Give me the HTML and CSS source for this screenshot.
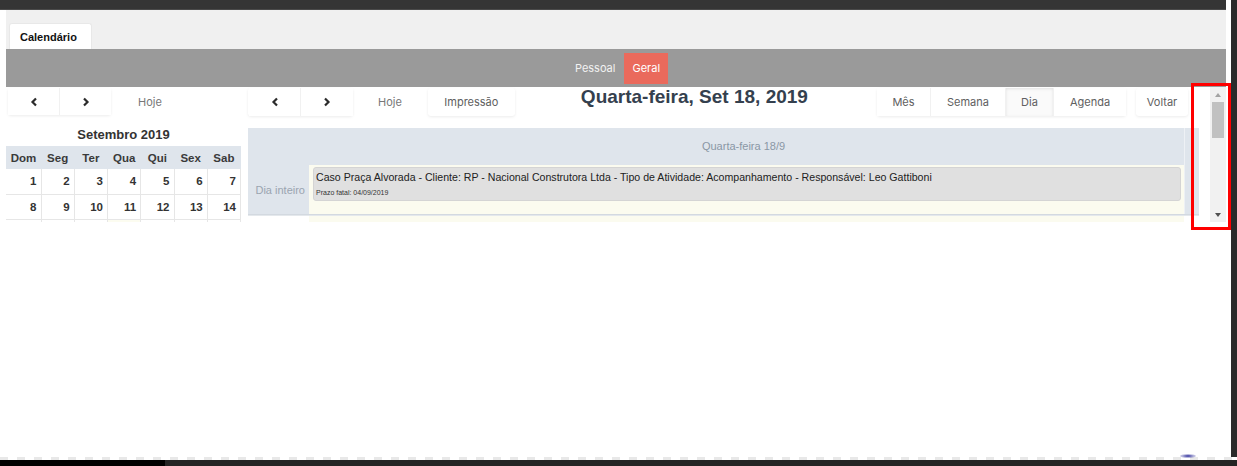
FILE: index.html
```html
<!DOCTYPE html>
<html lang="pt-BR">
<head>
<meta charset="utf-8">
<title>Calendário</title>
<link rel="stylesheet" href="styles.css">
</head>
<body>
<div class="screen">
  <div class="page">
    <div class="topbar"></div>
    <div class="app">
      <div class="tabs"><div class="tab">Calendário</div></div>
      <div class="band">
        <span class="band-item">Pessoal</span>
        <span class="band-item active">Geral</span>
      </div>
      <div class="viewport">
        <div class="content">
          <aside class="sidebar">
            <div class="toolbar">
              <div class="btn-group">
                <button class="btn nav nav-l"><svg width="8" height="10" viewBox="0 0 8 10"><path d="M6 1.5 2.5 5 6 8.5" fill="none" stroke="#2b2b2b" stroke-width="2.2"/></svg></button>
                <button class="btn nav nav-r"><svg width="8" height="10" viewBox="0 0 8 10"><path d="M2 1.5 5.5 5 2 8.5" fill="none" stroke="#2b2b2b" stroke-width="2.2"/></svg></button>
              </div>
              <button class="btn plain side-today">Hoje</button>
            </div>
            <div class="month-title">Setembro 2019</div>
            <table class="mini">
              <thead>
                <tr><th>Dom</th><th>Seg</th><th>Ter</th><th>Qua</th><th>Qui</th><th>Sex</th><th>Sab</th></tr>
              </thead>
              <tbody>
                <tr><td>1</td><td>2</td><td>3</td><td>4</td><td>5</td><td>6</td><td>7</td></tr>
                <tr><td>8</td><td>9</td><td>10</td><td>11</td><td>12</td><td>13</td><td>14</td></tr>
                <tr><td></td><td></td><td></td><td class="today"></td><td></td><td></td><td></td></tr>
              </tbody>
            </table>
          </aside>
          <main class="dayview">
            <div class="toolbar main-toolbar">
              <div class="btn-group">
                <button class="btn nav nav-l2"><svg width="8" height="10" viewBox="0 0 8 10"><path d="M6 1.5 2.5 5 6 8.5" fill="none" stroke="#2b2b2b" stroke-width="2.2"/></svg></button>
                <button class="btn nav nav-r2"><svg width="8" height="10" viewBox="0 0 8 10"><path d="M2 1.5 5.5 5 2 8.5" fill="none" stroke="#2b2b2b" stroke-width="2.2"/></svg></button>
              </div>
              <button class="btn plain main-today">Hoje</button>
              <button class="btn single print">Impressão</button>
              <h1 class="title">Quarta-feira, Set 18, 2019</h1>
              <div class="btn-group views">
                <button class="btn v-mes">Mês</button>
                <button class="btn v-sem">Semana</button>
                <button class="btn v-dia active">Dia</button>
                <button class="btn v-age">Agenda</button>
              </div>
              <button class="btn single back">Voltar</button>
            </div>
            <div class="grid">
              <div class="row head">
                <div class="label"></div>
                <div class="day day-head">Quarta-feira 18/9</div>
                <div class="gutter"></div>
              </div>
              <div class="row allday">
                <div class="label">Dia inteiro</div>
                <div class="day day-cell">
                  <div class="event">
                    <div class="ev-title">Caso Praça Alvorada - Cliente: RP - Nacional Construtora Ltda - Tipo de Atividade: Acompanhamento - Responsável: Leo Gattiboni</div>
                    <div class="ev-sub">Prazo fatal: 04/09/2019</div>
                  </div>
                </div>
                <div class="gutter"></div>
              </div>
              <div class="row slot">
                <div class="label slot-label"></div>
                <div class="day slot-day"></div>
                <div class="gutter"></div>
              </div>
            </div>
          </main>
        </div>
        <div class="scrollbar">
          <span class="arrow up"></span>
          <span class="thumb"></span>
          <span class="arrow down"></span>
        </div>
      </div>
      <div class="blank"></div>
    </div>
  </div>
  <div class="gap"></div>
  <div class="edge"></div>
</div>
<div class="dashes"></div>
<div class="taskbar"><div class="tb-left"></div><div class="tb-right"></div></div>
<div class="glow"></div>
<div class="annot"></div>
</body>
</html>
```

FILE: styles.css
```css
* { box-sizing: border-box; }
html, body { margin: 0; padding: 0; }
body {
  width: 1237px;
  height: 466px;
  overflow: hidden;
  background: #fff;
  font-family: "Liberation Sans", Arial, sans-serif;
  color: #222;
  position: relative;
}
.screen { display: flex; height: 457px; }
.page { width: 1226px; display: flex; flex-direction: column; }
.gap { width: 5px; background: #fff; }
.edge { width: 6px; background: #2a2a2a; }
.topbar { height: 10px; background: #353535; border-bottom: 1px solid #4a4a4a; }
.app { flex: 1; display: flex; flex-direction: column; padding-left: 6px; }
.tabs {
  height: 39px;
  background: #f0f0f0;
  display: flex;
  align-items: flex-end;
  padding-left: 3px;
}
.tab {
  width: 83px;
  height: 26px;
  background: #fff;
  border: 1px solid #e8e8e8;
  border-bottom: none;
  border-radius: 3px 3px 0 0;
  font-weight: bold;
  font-size: 11px;
  color: #111;
  padding: 7px 0 0 10px;
}
.band {
  height: 38px;
  background: #9a9a9a;
  display: flex;
  justify-content: center;
  align-items: center;
  padding-left: 2px;
}
.band-item {
  font-family: Inter, "Liberation Sans", sans-serif;
  font-size: 11px;
  color: #f2f2f2;
  padding: 0 9px;
  height: 31px;
  line-height: 31px;
}
.band-item.active { background: #ea6a5c; color: #fff; padding: 0 8px; margin-left: 0; }

.viewport { height: 135px; display: flex; overflow: hidden; }
.content { width: 1204px; display: flex; align-items: flex-start; }
.sidebar { width: 235px; flex: none; }
.dayview { width: 952px; margin-left: 7px; flex: none; }

.toolbar { display: flex; align-items: flex-start; margin-top: 1px; }
.btn-group {
  display: flex;
  background: #fff;
  border-radius: 3px;
  box-shadow: 0 1px 3px rgba(0,0,0,0.08);
}
.btn {
  font-family: Inter, "Liberation Sans", sans-serif;
  font-size: 11px;
  color: #606060;
  background: #fff;
  border: none;
  height: 27px;
  padding: 0;
  display: flex;
  align-items: center;
  justify-content: center;
}
.btn-group .btn + .btn { border-left: 1px solid #f1f1f1; }
.btn.plain { background: transparent; }
.btn.single { border-radius: 3px; box-shadow: 0 1px 3px rgba(0,0,0,0.08); height: 28px; }
.sidebar .btn-group { margin-left: 2px; }
.nav-l { width: 51px; }
.nav-r { width: 52px; }
.side-today { padding: 0 0 0 27px; color: #777; }
.main-toolbar .btn-group .btn { height: 28px; }
.nav-l2 { width: 51px; margin-left: 1px; }
.nav-r2 { width: 53px; }
.main-today { padding: 0 0 0 25px; color: #777; }
.print { width: 87px; margin-left: 26px; }
.title {
  margin: -2px 0 0 66px;
  font-family: "Liberation Sans", Arial, sans-serif;
  font-size: 19px;
  line-height: 22px;
  font-weight: bold;
  color: #34404e;
  white-space: nowrap;
}
.views { margin-left: auto; }
.v-mes { width: 53px; }
.v-sem { width: 75px; }
.v-dia { width: 48px; }
.v-dia.active { background: #fafafa; box-shadow: inset 0 1px 3px rgba(0,0,0,0.1); }
.v-age { width: 73px; }
.back { width: 52px; margin-left: 10px; margin-right: 12px; }

.month-title {
  margin-top: 12px;
  text-align: center;
  font-weight: bold;
  font-size: 13px;
  color: #333;
  height: 19px;
}
.mini {
  width: 235px;
  border-collapse: collapse;
  table-layout: fixed;
  font-weight: bold;
  font-size: 11.5px;
  color: #333;
}
.mini th {
  background: #dfe5ec;
  height: 23px;
  font-weight: bold;
  text-align: center;
  padding: 0;
  color: #3a3a3a;
}
.mini th:first-child { width: 35px; }
.mini td {
  height: 25px;
  text-align: right;
  padding: 0 4px 0 0;
  border: 1px solid #e6e6e6;
  border-top: none;
}
.mini td:first-child { border-left: none; }
.mini td.today { background: #fcfcf0; }

.grid { margin-top: 12px; width: 951px; }
.row { display: flex; }
.row .label { width: 61px; flex: none; }
.row .day { width: 875px; flex: none; }
.row .gutter { width: 15px; flex: none; border-left: 1px solid #eef1f5; background: #dfe5ec; }
.head { height: 37px; background: #dfe5ec; }
.day-head {
  text-align: center;
  line-height: 37px;
  font-size: 11px;
  color: #8a97a5;
  padding-right: 6px;
}
.allday { height: 50px; border-bottom: 1px solid #d3d9e0; }
.allday .label {
  background: #dfe5ec;
  font-size: 11px;
  color: #9aa4b0;
  text-align: right;
  padding: 19px 4px 0 0;
}
.day-cell { background: #fbfbef; padding: 2px 3px 0 4px; }
.allday .gutter { background: #dfe5ec; }
.event {
  height: 34px;
  background: #e0e0e0;
  border: 1px solid #d4d4d4;
  border-radius: 3px;
  padding: 3px 2px 0 2px;
}
.ev-title { font-size: 10.6px; color: #222; white-space: nowrap; }
.ev-sub { font-size: 7px; color: #333; margin-top: 6px; }
.slot { height: 20px; border-top: 1px solid #e4e8ec; }
.slot-label { background: #fff; }
.slot-day { background: #fbfbef; }
.slot .gutter { background: #fff; border-left: none; }

.scrollbar {
  width: 16px;
  margin-left: 6px;
  background: #f1f1f1;
  position: relative;
  display: flex;
  flex-direction: column;
  align-items: center;
}
.arrow { width: 0; height: 0; border-left: 3.5px solid transparent; border-right: 3.5px solid transparent; }
.arrow.up { border-bottom: 4px solid #a3a3a3; margin-top: 6px; }
.thumb { width: 12px; height: 36px; background: #c1c1c1; margin-top: 5px; }
.arrow.down { border-top: 4px solid #505050; margin-top: auto; margin-bottom: 5px; }

.blank { flex: 1; background: #fff; }

.dashes {
  height: 3px;
  background: repeating-linear-gradient(to right, #e8e8e8 0 8px, #ffffff 8px 17px);
}
.taskbar { height: 6px; display: flex; }
.tb-left { width: 165px; background: #000; }
.tb-right { flex: 1; background: #242424; }

.glow {
  position: absolute;
  left: 1180px;
  top: 454px;
  width: 16px;
  height: 4px;
  border-radius: 50%;
  background: radial-gradient(ellipse at center, #2a2a9a 0%, rgba(60,60,160,0.4) 50%, rgba(255,255,255,0) 100%);
}
.annot {
  position: absolute;
  left: 1191px;
  top: 83px;
  width: 40px;
  height: 147px;
  border: 3px solid #ff0000;
}
```
